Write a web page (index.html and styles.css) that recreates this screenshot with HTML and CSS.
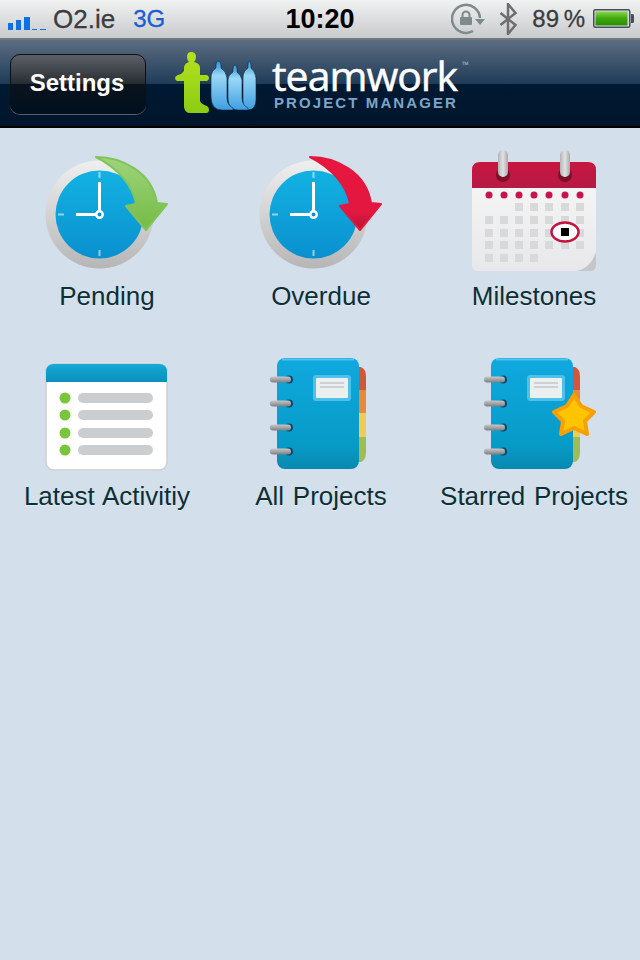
FILE: index.html
```html
<!DOCTYPE html>
<html lang="en">
<head>
<meta charset="utf-8">
<title>Teamwork Project Manager</title>
<link rel="stylesheet" href="styles.css">
</head>
<body>
<svg class="defs" aria-hidden="true">
  <defs>
    <linearGradient id="rim" x1="0" y1="0" x2="0" y2="1"><stop offset="0" stop-color="#efefef"/><stop offset="1" stop-color="#b6b6b6"/></linearGradient>
    <linearGradient id="face" x1="0" y1="0" x2="0" y2="1"><stop offset="0" stop-color="#12b2e2"/><stop offset="1" stop-color="#0a90cf"/></linearGradient>
    <linearGradient id="green" x1="0" y1="0" x2="0" y2="1"><stop offset="0" stop-color="#9fd47c"/><stop offset="1" stop-color="#74bb46"/></linearGradient>
    <linearGradient id="red" x1="0" y1="0" x2="0" y2="1"><stop offset="0" stop-color="#e8163f"/><stop offset=".75" stop-color="#e2183f"/><stop offset="1" stop-color="#b81238"/></linearGradient>
    <linearGradient id="calTop" x1="0" y1="0" x2="0" y2="1"><stop offset="0" stop-color="#c8163f"/><stop offset="1" stop-color="#b51a45"/></linearGradient>
    <linearGradient id="calBody" x1="0" y1="0" x2="0" y2="1"><stop offset="0" stop-color="#f8f8f8"/><stop offset="1" stop-color="#e8e8ea"/></linearGradient>
    <linearGradient id="ring" x1="0" y1="0" x2="1" y2="0"><stop offset="0" stop-color="#b4b4b8"/><stop offset=".5" stop-color="#e2e2e4"/><stop offset="1" stop-color="#a8a8ac"/></linearGradient>
    <linearGradient id="listTop" x1="0" y1="0" x2="0" y2="1"><stop offset="0" stop-color="#17a9d6"/><stop offset="1" stop-color="#0a8fbd"/></linearGradient>
    <linearGradient id="cover" x1="0" y1="0" x2="0" y2="1"><stop offset="0" stop-color="#10a9df"/><stop offset=".8" stop-color="#069ac6"/><stop offset="1" stop-color="#0888b0"/></linearGradient>
    <linearGradient id="wire" x1="0" y1="0" x2="0" y2="1"><stop offset="0" stop-color="#c8c8c8"/><stop offset="1" stop-color="#7c8084"/></linearGradient>
    <linearGradient id="batt" x1="0" y1="0" x2="0" y2="1"><stop offset="0" stop-color="#8ad84a"/><stop offset=".5" stop-color="#3fa80e"/><stop offset="1" stop-color="#2b8c06"/></linearGradient>
    <linearGradient id="logoGreen" x1="0" y1="0" x2="0" y2="1"><stop offset="0" stop-color="#b4e21e"/><stop offset="1" stop-color="#8ccc14"/></linearGradient>
    <linearGradient id="logoBlue" x1="0" y1="0" x2="0" y2="1"><stop offset="0" stop-color="#2f8fd0"/><stop offset=".3" stop-color="#9ad8f6"/><stop offset="1" stop-color="#3f9fe0"/></linearGradient>
    <g id="clock">
      <circle cx="99.5" cy="214.5" r="54" fill="url(#rim)"/>
      <circle cx="99.5" cy="214.5" r="44" fill="url(#face)"/>
      <path class="tick" d="M99.5 172v6M99.5 250v6M58 214.5h6"/>
      <path class="hand" d="M99.5 182v32.5H76"/>
      <circle class="hub" cx="99.5" cy="214.5" r="3.2"/>
    </g>
    <path id="arrowShape" d="M96 157C122 157 152 172 157 203L167 204L146 230L126 206L136 204C133 186 118 168 96 157Z"/>
    <g id="notebook">
      <path class="tab tab1" d="M355 367h6q5 2 5 10v13h-11z"/>
      <path class="tab tab2" d="M355 390h11v23h-11z"/>
      <path class="tab tab3" d="M355 413h11v24h-11z"/>
      <path class="tab tab4" d="M355 437h11v15q0 8-5 10h-6z"/>
      <rect x="277" y="358" width="82" height="111" rx="8" fill="url(#cover)"/>
      <path class="sheen" d="M282 359.500h72"/>
      <g class="holes"><circle cx="289" cy="379.500" r="4"/><circle cx="289" cy="403.500" r="4"/><circle cx="289" cy="427.500" r="4"/><circle cx="289" cy="451.500" r="4"/></g>
      <rect x="270" y="376.500" width="21" height="6" rx="3" fill="url(#wire)"/>
      <rect x="270" y="400.500" width="21" height="6" rx="3" fill="url(#wire)"/>
      <rect x="270" y="424.500" width="21" height="6" rx="3" fill="url(#wire)"/>
      <rect x="270" y="448.500" width="21" height="6" rx="3" fill="url(#wire)"/>
      <rect x="313" y="375" width="38" height="26" rx="3" fill="#4fc0e8"/>
      <rect x="316" y="378" width="32" height="20" rx="1" fill="#eceff0"/>
      <path class="note-line" d="M320 383h24M320 387h24"/>
    </g>
  </defs>
</svg>

<header class="status">
  <div class="status-left">
    <svg class="signal" viewBox="0 0 40 15" width="40" height="15"><rect x="0" y="7" width="5" height="7"/><rect x="8" y="4" width="5" height="10"/><rect x="16" y="1" width="6" height="13"/><rect x="24" y="13" width="5" height="1"/><rect x="32" y="13" width="6" height="1"/></svg>
    <span class="carrier">O2.ie</span>
    <span class="network">3G</span>
  </div>
  <div class="time">10:20</div>
  <div class="status-right">
    <svg class="lock" viewBox="0 0 36 32" width="36" height="32">
      <path class="lock-ring" d="M22 28A14 14 0 1 1 29 15"/>
      <path class="lock-arrow" d="M24 16h10l-5 6z"/>
      <rect class="lock-arrow" x="9" y="14" width="12" height="8" rx="1"/>
      <path class="lock-ring thin" d="M11.500 14v-2a3.500 3.500 0 0 1 7 0v2"/>
    </svg>
    <svg class="bt" viewBox="0 0 20 32" width="20" height="32"><path d="M1.500 10L16.500 22L9 31V1L16.500 10L1.500 22"/></svg>
    <span class="pct">89 %</span>
    <svg class="battery" viewBox="0 0 41 20" width="41" height="20">
      <rect x=".75" y=".75" width="36" height="17.500" rx="1.500" class="batt-shell"/>
      <rect x="2.500" y="2.500" width="32" height="14" fill="url(#batt)"/>
      <path class="batt-tip" d="M38 5h1.500q1.500 0 1.500 1.500v6q0 1.500-1.500 1.500H38z"/>
    </svg>
  </div>
</header>

<nav class="navbar">
  <button class="settings">Settings</button>
  <div class="logo">
    <svg class="logo-mark" viewBox="170 48 90 70" width="90" height="70">
      <g class="logo-blue">
        <path d="M249 61q2 0 2 4v3q4 3 5 10v21q0 11-8 11q-5 0-5-10V78q0-7 5-10v-3q0-4 1-4z"/>
        <path d="M235 65q2 0 2 4v3q4 3 5 8v18q0 7 6 10v2h-10q-10 0-10-12V80q0-5 5-8v-3q0-4 2-4z"/>
        <path d="M218 61q3 0 3 4v3q5 3 6 10v20q0 7 6 10v2h-11q-11 0-11-14V78q0-7 5-10v-3q0-4 2-4z"/>
      </g>
      <path d="M191 52q5 0 5 5 0 3-2 5 5 1 6 5v8h7q2 1 2 3t-2 3h-7v20q1 3 7 5 2 1 2 4t-3 3h-16q-5 0-6-6V81h-7q-2-1-2-3t3-3q4-1 6-4v-4q1-4 5-5-2-2-2-5 0-5 4-5z" fill="url(#logoGreen)"/>
    </svg>
    <div class="wordmark">
      <div class="brand">teamwork<span class="tm">™</span></div>
      <div class="tagline">PROJECT MANAGER</div>
    </div>
  </div>
</nav>

<main class="grid">
  <a class="tile">
    <svg class="icon" viewBox="32 145 150 130"><use href="#clock"/><use href="#arrowShape" class="arrow-green"/></svg>
    <span class="label">Pending</span>
  </a>
  <a class="tile">
    <svg class="icon" viewBox="32 145 150 130"><use href="#clock"/><use href="#arrowShape" class="arrow-red"/></svg>
    <span class="label">Overdue</span>
  </a>
  <a class="tile">
    <svg class="icon" viewBox="459 145 150 130">
      <path d="M472 170q0-8 8-8h108q8 0 8 8v95q0 6-6 6H478q-6 0-6-6z" fill="url(#calBody)"/>
      <path d="M596 252v13q0 6-6 6h-14q14-2 20-19z" fill="#c4c6c8"/>
      <path d="M472 188v-18q0-8 8-8h108q8 0 8 8v18z" fill="url(#calTop)"/>
      <circle cx="503" cy="175" r="7" fill="#7c1029"/><circle cx="565" cy="175" r="7" fill="#7c1029"/>
      <rect x="498" y="150" width="10" height="27" rx="5" fill="url(#ring)"/>
      <rect x="560" y="150" width="10" height="27" rx="5" fill="url(#ring)"/>
      <g fill="#c8144c"><circle cx="489" cy="195" r="3.500"/><circle cx="504" cy="195" r="3.500"/><circle cx="519" cy="195" r="3.500"/><circle cx="534" cy="195" r="3.500"/><circle cx="549" cy="195" r="3.500"/><circle cx="565" cy="195" r="3.500"/><circle cx="580" cy="195" r="3.500"/></g>
      <path class="cal-days" d="M515 207h8M530 207h8M545 207h8M561 207h8M576 207h8M485 220h8M500 220h8M515 220h8M530 220h8M545 220h8M561 220h8M576 220h8M485 233h8M500 233h8M515 233h8M530 233h8M545 233h8M576 233h8M485 245h8M500 245h8M515 245h8M530 245h8M545 245h8M561 245h8M576 245h8M485 258h8M500 258h8M515 258h8M530 258h8"/>
      <ellipse cx="565" cy="232" rx="13.500" ry="9.500" fill="#fff" stroke="#c2143e" stroke-width="2.500"/>
      <rect x="561" y="228" width="8" height="8" fill="#000"/>
    </svg>
    <span class="label">Milestones</span>
  </a>
  <a class="tile">
    <svg class="icon" viewBox="32 345 150 130">
      <rect x="46" y="364" width="121" height="106" rx="8" fill="#fff" stroke="#cfd0d2" stroke-width="1.500"/>
      <path d="M46 382v-10q0-8 8-8h105q8 0 8 8v10z" fill="url(#listTop)"/>
      <g fill="#79c63c"><circle cx="65" cy="398" r="5.500"/><circle cx="65" cy="415" r="5.500"/><circle cx="65" cy="433" r="5.500"/><circle cx="65" cy="450" r="5.500"/></g>
      <g fill="#cccdcf"><rect x="78" y="393" width="75" height="10" rx="5"/><rect x="78" y="410" width="75" height="10" rx="5"/><rect x="78" y="428" width="75" height="10" rx="5"/><rect x="78" y="445" width="75" height="10" rx="5"/></g>
    </svg>
    <span class="label">Latest Activitiy</span>
  </a>
  <a class="tile">
    <svg class="icon" viewBox="246 345 150 130"><use href="#notebook"/></svg>
    <span class="label">All Projects</span>
  </a>
  <a class="tile">
    <svg class="icon" viewBox="245 345 150 130">
      <use href="#notebook"/>
      <path class="star" d="M360 395L367 406L380 412L371 421L373 434L360 428L347 434L349 421L340 412L353 406Z"/>
    </svg>
    <span class="label">Starred Projects</span>
  </a>
</main>
</body>
</html>
```
FILE: styles.css
```css
* { box-sizing: border-box; }
html, body { margin: 0; height: 100%; }
body {
  width: 640px;
  min-height: 960px;
  background: #d3dfea;
  font-family: "Liberation Sans", Arial, sans-serif;
  overflow: hidden;
}
.defs { position: absolute; width: 0; height: 0; }

.status {
  height: 40px;
  display: grid;
  grid-template-columns: 1fr auto 1fr;
  align-items: center;
  background: linear-gradient(#f1f2f2, #c8cacc);
  border-bottom: 2px solid #6f7880;
  padding: 0 6px;
}
.status-left, .status-right { display: flex; align-items: center; }
.status-right { justify-content: flex-end; }
.signal { fill: #1070e0; margin: 8px 0 0 2px; }
.carrier { margin-left: 5px; font-size: 26px; color: #3c3c3e; -webkit-text-stroke: .3px #3c3c3e; }
.network { margin-left: 18px; font-size: 24px; color: #1a5cd4; -webkit-text-stroke: .3px #1a5cd4; }
.time { font-size: 27px; font-weight: 700; color: #000; }
.lock { margin-right: 12px; }
.lock-ring { fill: none; stroke: #7f8a8a; stroke-width: 2.5; }
.lock-ring.thin { stroke-width: 2; }
.lock-arrow { fill: #7f8a8a; }
.bt { margin-right: 13px; }
.bt path { fill: none; stroke: #6e6e70; stroke-width: 2.5; }
.pct { font-size: 24px; color: #3c3c3e; word-spacing: -2px; margin-right: 8px; -webkit-text-stroke: .3px #3c3c3e; }
.batt-shell { fill: #d8dade; stroke: #45505c; stroke-width: 1.5; }
.batt-tip { fill: #45505c; }

.navbar {
  height: 88px;
  display: flex;
  align-items: flex-start;
  gap: 24px;
  padding: 14px 0 0 10px;
  background: linear-gradient(#5c6d81 0, #1f3b58 50%, #001a33 50%, #00152b 98%, #000 98%);
}
.settings {
  width: 136px;
  height: 60px;
  border-radius: 10px;
  border: 1px solid #0b1017;
  box-shadow: 0 1px 0 #4f5f70;
  background: linear-gradient(#5c6168 0, #272c33 50%, #0a131d 50%, #00101f 100%);
  color: #fff;
  font: 700 24px "Liberation Sans", Arial, sans-serif;
  padding: 0 2px 2px 0;
}
.logo { display: flex; align-items: flex-start; margin-top: -6px; }
.logo-mark { filter: blur(.5px); }
.logo-blue { fill: url(#logoBlue); stroke: #0a2a48; stroke-width: .6; }
.wordmark { margin-left: 12px; margin-top: 9px; display: flex; flex-direction: column; }
.brand {
  font: 400 41px/36px "Open Sans", sans-serif;
  letter-spacing: -1px;
  -webkit-text-stroke: .5px #fff;
  color: #fff;
  position: relative;
}
.tm { position: absolute; top: 3px; left: 190px; font-size: 9px; line-height: 10px; letter-spacing: 0; color: #a9b8c8; -webkit-text-stroke: 0; }
.tagline {
  margin-top: 3px;
  margin-left: 2px;
  font: 700 15px/13px "Liberation Sans", sans-serif;
  letter-spacing: 2.100px;
  color: #7da5c8;
  white-space: nowrap;
}

.grid {
  display: grid;
  grid-template-columns: 214px 214px 212px;
  row-gap: 34px;
  padding-top: 17px;
}
.tile { display: flex; flex-direction: column; align-items: center; }
.icon { width: 150px; height: 130px; display: block; filter: blur(.7px); }
.label {
  margin-top: 6px;
  font-size: 26px;
  line-height: 30px;
  color: #0c2f36;
  white-space: nowrap;
  word-spacing: 1.500px;
  text-shadow: 0 1px 0 rgba(255, 255, 255, .4);
}

.tick { fill: none; stroke: rgba(255, 255, 255, .55); stroke-width: 2; }
.hand { fill: none; stroke: #fff; stroke-width: 3; }
.hub { fill: #0a90cf; stroke: #fff; stroke-width: 2.500; }
.arrow-green { fill: url(#green); stroke: #82c45a; stroke-width: 2; stroke-linejoin: round; }
.arrow-red { fill: url(#red); stroke: #e2183f; stroke-width: 2; stroke-linejoin: round; }
.cal-days { fill: none; stroke: #d8d9db; stroke-width: 8; }
.tab1 { fill: #d2573a; }
.tab2 { fill: #e88a38; }
.tab3 { fill: #f0cc55; }
.tab4 { fill: #9fbc55; }
.sheen { fill: none; stroke: rgba(255, 255, 255, .3); stroke-width: 2; }
.holes { fill: #0a4a68; }
.note-line { fill: none; stroke: #c4c8ca; stroke-width: 1.500; }
.star { fill: #ffc400; stroke: #f8a000; stroke-width: 4; stroke-linejoin: round; }
```
